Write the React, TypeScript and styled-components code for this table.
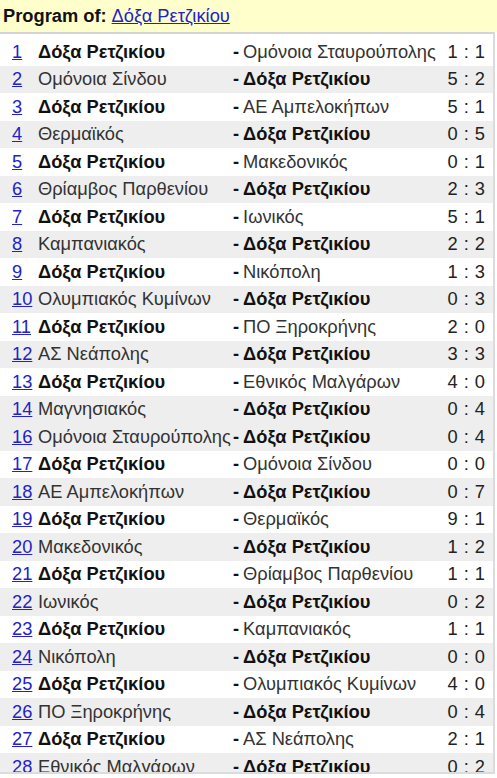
import React from "react";
import styled, { createGlobalStyle } from "styled-components";

const Global = createGlobalStyle`
  html, body { margin: 0; padding: 0; background: #ffffff; }
  body { font-family: "Liberation Sans", Arial, sans-serif; color: #222; overflow: hidden; }
`;

const Header = styled.div`
  height: 32px;
  background: #ffffcc;
  display: flex;
  align-items: center;
  padding-left: 3px;
  font-size: 18.3px;
  box-sizing: border-box;
`;

const Label = styled.span`
  font-weight: bold;
  color: #111;
  margin-right: 5px;
`;

const Link = styled.a`
  color: #2222cc;
  text-decoration: underline;
`;

const Panel = styled.div`
  border-top: 2px solid #d4d4d4;
  border-right: 2px solid #dcdcdc;
  border-bottom: 2px solid #dcdcdc;
  padding-top: 4px;
  width: 495px;
  height: 742px;
  overflow: hidden;
  box-sizing: border-box;
`;

const Row = styled.div<{ $alt: boolean }>`
  display: grid;
  grid-template-columns: 26px 195px 1fr auto;
  align-items: center;
  height: 27.5px;
  padding: 0 8px 0 12px;
  background: ${(p) => (p.$alt ? "#eeeeee" : "#ffffff")};
  font-size: 18.3px;
  white-space: nowrap;
`;

const Num = styled.a`
  color: #2222cc;
  text-decoration: underline;
`;

const Team = styled.span<{ $bold: boolean }>`
  font-weight: ${(p) => (p.$bold ? "bold" : "normal")};
  color: ${(p) => (p.$bold ? "#111" : "#333")};
`;

const Dash = styled.span`
  font-weight: bold;
  color: #111;
  margin-right: 4px;
`;

const Score = styled.span`
  color: #222;
  text-align: right;
  word-spacing: 1px;
`;

const ME = "Δόξα Ρετζικίου";

const games: [number, string, string, string][] = [
  [1, ME, "Ομόνοια Σταυρούπολης", "1 : 1"],
  [2, "Ομόνοια Σίνδου", ME, "5 : 2"],
  [3, ME, "ΑΕ Αμπελοκήπων", "5 : 1"],
  [4, "Θερμαϊκός", ME, "0 : 5"],
  [5, ME, "Μακεδονικός", "0 : 1"],
  [6, "Θρίαμβος Παρθενίου", ME, "2 : 3"],
  [7, ME, "Ιωνικός", "5 : 1"],
  [8, "Καμπανιακός", ME, "2 : 2"],
  [9, ME, "Νικόπολη", "1 : 3"],
  [10, "Ολυμπιακός Κυμίνων", ME, "0 : 3"],
  [11, ME, "ΠΟ Ξηροκρήνης", "2 : 0"],
  [12, "ΑΣ Νεάπολης", ME, "3 : 3"],
  [13, ME, "Εθνικός Μαλγάρων", "4 : 0"],
  [14, "Μαγνησιακός", ME, "0 : 4"],
  [16, "Ομόνοια Σταυρούπολης", ME, "0 : 4"],
  [17, ME, "Ομόνοια Σίνδου", "0 : 0"],
  [18, "ΑΕ Αμπελοκήπων", ME, "0 : 7"],
  [19, ME, "Θερμαϊκός", "9 : 1"],
  [20, "Μακεδονικός", ME, "1 : 2"],
  [21, ME, "Θρίαμβος Παρθενίου", "1 : 1"],
  [22, "Ιωνικός", ME, "0 : 2"],
  [23, ME, "Καμπανιακός", "1 : 1"],
  [24, "Νικόπολη", ME, "0 : 0"],
  [25, ME, "Ολυμπιακός Κυμίνων", "4 : 0"],
  [26, "ΠΟ Ξηροκρήνης", ME, "0 : 4"],
  [27, ME, "ΑΣ Νεάπολης", "2 : 1"],
  [28, "Εθνικός Μαλγάρων", ME, "0 : 2"],
];

export default function App() {
  return (
    <>
      <Global />
      <Header>
        <Label>Program of:</Label>
        <Link href="#">{ME}</Link>
      </Header>
      <Panel>
        {games.map(([n, home, away, score]) => (
          <Row key={n} $alt={n % 2 === 0}>
            <Num href="#">{n}</Num>
            <Team $bold={home === ME}>{home}</Team>
            <span>
              <Dash>-</Dash>
              <Team $bold={away === ME}>{away}</Team>
            </span>
            <Score>{score}</Score>
          </Row>
        ))}
      </Panel>
    </>
  );
}
